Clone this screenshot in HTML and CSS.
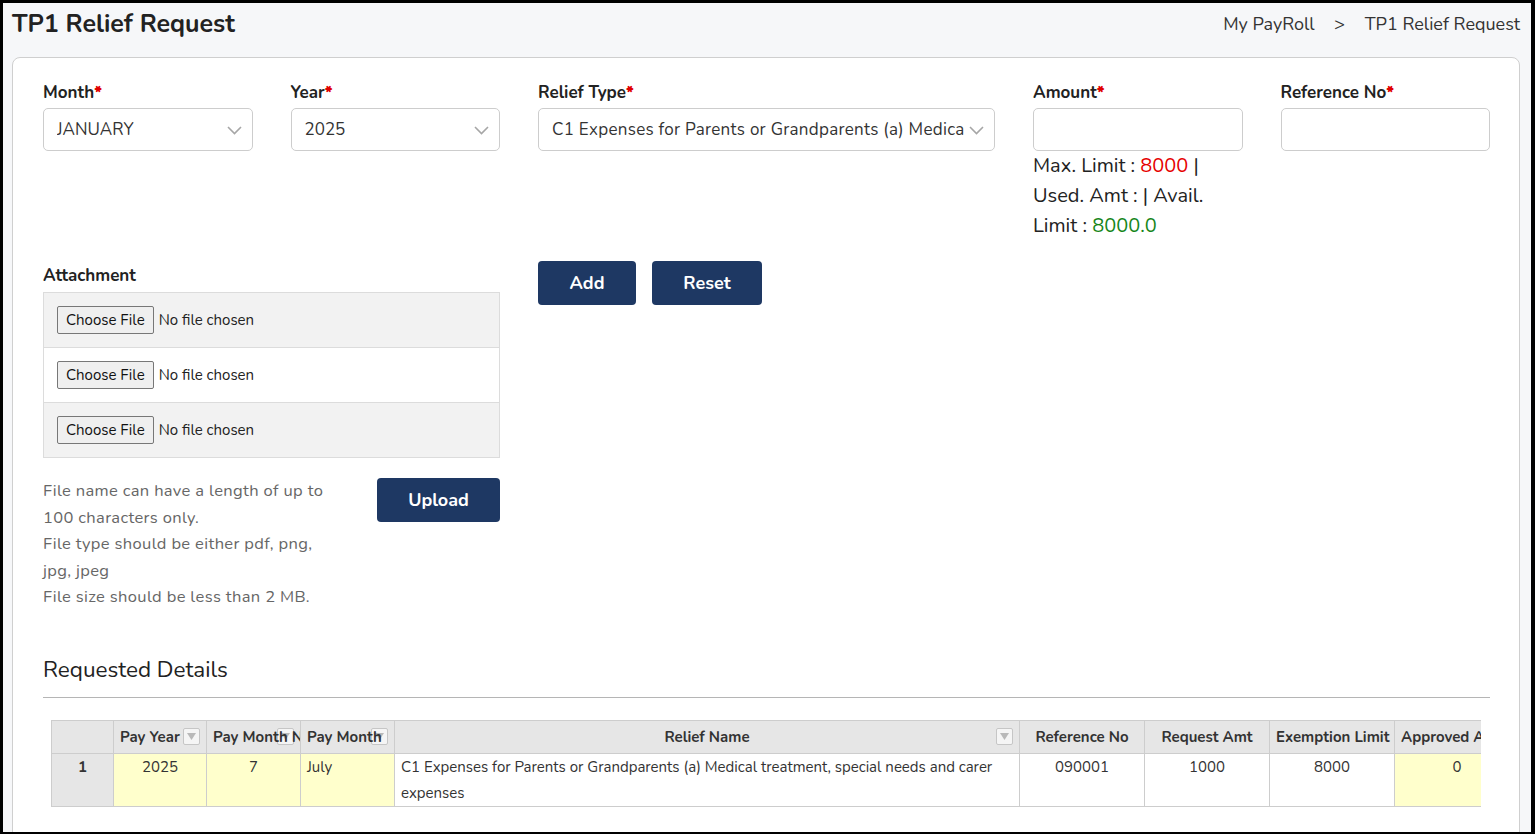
FILE: index.html
```html
<!DOCTYPE html>
<html lang="en">
<head>
  <meta charset="UTF-8">
  <title>TP1 Relief Request</title>
  <link rel="stylesheet" href="styles.css">
</head>
<body>
<div class="page">
  <header class="page-head">
    <h1>TP1 Relief Request</h1>
    <nav class="crumbs">My PayRoll <span class="sep">&gt;</span> TP1 Relief Request</nav>
  </header>

  <section class="card">
    <div class="form-row">
      <div class="field span-2">
        <label>Month<b>*</b></label>
        <div class="select">
          <span>JANUARY</span>
          <svg class="chev" width="15" height="9" viewBox="0 0 15 9"><polyline points="1,1 7.5,7.5 14,1"/></svg>
        </div>
      </div>
      <div class="field span-2">
        <label>Year<b>*</b></label>
        <div class="select">
          <span>2025</span>
          <svg class="chev" width="15" height="9" viewBox="0 0 15 9"><polyline points="1,1 7.5,7.5 14,1"/></svg>
        </div>
      </div>
      <div class="field span-4">
        <label>Relief Type<b>*</b></label>
        <div class="select wide">
          <span>C1 Expenses for Parents or Grandparents (a) Medical treatment, special needs and carer expenses</span>
          <svg class="chev" width="15" height="9" viewBox="0 0 15 9"><polyline points="1,1 7.5,7.5 14,1"/></svg>
        </div>
      </div>
      <div class="field span-2">
        <label>Amount<b>*</b></label>
        <input class="text-input" type="text">
        <div class="limits">Max. Limit : <span class="red">8000</span> | Used. Amt : | Avail. Limit : <span class="green">8000.0</span></div>
      </div>
      <div class="field span-2">
        <label>Reference No<b>*</b></label>
        <input class="text-input" type="text">
      </div>
    </div>

    <div class="form-row row-two">
      <div class="span-4 attach">
        <label>Attachment</label>
        <div class="attach-list">
          <div class="attach-row"><span class="file-btn">Choose File</span><span class="file-name">No file chosen</span></div>
          <div class="attach-row"><span class="file-btn">Choose File</span><span class="file-name">No file chosen</span></div>
          <div class="attach-row"><span class="file-btn">Choose File</span><span class="file-name">No file chosen</span></div>
        </div>
        <div class="upload-line">
          <div class="help">
            File name can have a length of up to 100 characters only.<br>
            File type should be either pdf, png, jpg, jpeg<br>
            File size should be less than 2 MB.
          </div>
          <button class="btn btn-upload">Upload</button>
        </div>
      </div>
      <div class="span-4 actions">
        <button class="btn btn-add">Add</button>
        <button class="btn btn-reset">Reset</button>
      </div>
    </div>

    <h2 class="section-title">Requested Details</h2>

    <div class="grid-wrap">
      <table class="grid">
        <colgroup>
          <col style="width:62px">
          <col style="width:93px">
          <col style="width:94px">
          <col style="width:94px">
          <col style="width:625px">
          <col style="width:125px">
          <col style="width:125px">
          <col style="width:125px">
          <col style="width:125px">
        </colgroup>
        <thead>
          <tr>
            <th></th>
            <th><span>Pay Year</span><i class="filter"><svg width="9" height="7" viewBox="0 0 9 7"><polygon points="0,0 9,0 4.5,7"/></svg></i></th>
            <th><span>Pay Month No</span><i class="filter"><svg width="9" height="7" viewBox="0 0 9 7"><polygon points="0,0 9,0 4.5,7"/></svg></i></th>
            <th><span>Pay Month</span><i class="filter"><svg width="9" height="7" viewBox="0 0 9 7"><polygon points="0,0 9,0 4.5,7"/></svg></i></th>
            <th class="c"><span>Relief Name</span><i class="filter"><svg width="9" height="7" viewBox="0 0 9 7"><polygon points="0,0 9,0 4.5,7"/></svg></i></th>
            <th class="c">Reference No</th>
            <th class="c">Request Amt</th>
            <th>Exemption Limit (RM)</th>
            <th>Approved Amt</th>
          </tr>
        </thead>
        <tbody>
          <tr>
            <td class="num">1</td>
            <td class="c hl">2025</td>
            <td class="c hl">7</td>
            <td class="hl">July</td>
            <td>C1 Expenses for Parents or Grandparents (a) Medical treatment, special needs and carer expenses</td>
            <td class="c">090001</td>
            <td class="c">1000</td>
            <td class="c">8000</td>
            <td class="c hl">0</td>
          </tr>
        </tbody>
      </table>
    </div>
  </section>
</div>
</body>
</html>
```

FILE: styles.css
```css
* {
  box-sizing: border-box;
}

html,
body {
  margin: 0;
  height: 834px;
  overflow: hidden;
  background: #000;
}

body {
  padding: 3px 4px 0 3px;
  font-family: "Nunito", Lato, "Noto Sans", sans-serif;
  color: #222;
}

.page {
  height: 829px;
  overflow: hidden;
  background: #f6f7f9;
  padding: 0 11px 0 9px;
}

.page-head {
  height: 42px;
  display: flex;
  align-items: center;
  justify-content: space-between;
}

.page-head h1 {
  margin: 0;
  font-size: 25px;
  font-weight: 700;
  color: #222;
}

.crumbs {
  font-size: 18px;
  color: #333;
}

.crumbs .sep {
  margin: 0 15px;
}

.card {
  margin-top: 12px;
  background: #fff;
  border: 1px solid #cfcfcf;
  border-radius: 8px;
  padding: 24px 29px 40px 30px;
  min-height: 800px;
}

.form-row {
  display: grid;
  grid-template-columns: repeat(12, 1fr);
  column-gap: 38px;
  align-items: start;
}

.span-2 {
  grid-column: span 2;
}

.span-4 {
  grid-column: span 4;
}

.field label,
.attach label {
  display: block;
  font-size: 17px;
  font-weight: 700;
  line-height: 22px;
  color: #222;
  margin-bottom: 4px;
}

.field label b {
  color: #e00000;
}

.select,
.text-input {
  display: flex;
  align-items: center;
  position: relative;
  width: 100%;
  height: 43px;
  border: 1px solid #cdcdcd;
  border-radius: 5px;
  background: #fff;
  font-family: inherit;
  font-size: 17px;
  color: #333;
}

.select {
  padding: 0 29px 0 13px;
}

.select span {
  white-space: nowrap;
  overflow: hidden;
}

.select.wide span {
  letter-spacing: 0.28px;
}

.chev {
  position: absolute;
  right: 10px;
  top: 17px;
  fill: none;
  stroke: #a6a6a6;
  stroke-width: 1.6;
}

.limits {
  font-size: 20px;
  line-height: 30px;
  color: #222;
}

.red {
  color: #e60000;
}

.green {
  color: #16861a;
}

.row-two {
  margin-top: 20px;
}

.attach label {
  padding-top: 4px;
  margin-bottom: 5px;
}

.attach-list {
  border: 1px solid #dcdcdc;
}

.attach-row {
  height: 55px;
  display: flex;
  align-items: center;
  padding-left: 13px;
  background: #f2f2f2;
  border-top: 1px solid #dcdcdc;
}

.attach-row:first-child {
  height: 54px;
  border-top: 0;
}

.attach-row:nth-child(2) {
  background: #fff;
}

.file-btn {
  display: inline-block;
  height: 28px;
  line-height: 26px;
  padding: 0 8px;
  border: 1px solid #777;
  border-radius: 2px;
  background: #efefef;
  font-size: 15px;
  color: #111;
}

.file-name {
  margin-left: 5px;
  font-size: 15px;
  color: #222;
}

.upload-line {
  display: flex;
  justify-content: space-between;
  align-items: flex-start;
  margin-top: 20px;
}

.help {
  width: 292px;
  font-size: 16.5px;
  letter-spacing: 0.35px;
  line-height: 26.5px;
  color: #666;
}

.btn {
  height: 44px;
  border: 0;
  border-radius: 4px;
  background: #1e3863;
  color: #fff;
  font-family: inherit;
  font-size: 18px;
  font-weight: 700;
  cursor: pointer;
}

.btn-upload {
  width: 123px;
}

.btn-add {
  width: 98px;
}

.btn-reset {
  width: 110px;
  margin-left: 12px;
}

.actions {
  display: flex;
  gap: 4px;
}

.section-title {
  margin: 44px 0 0;
  font-size: 22.5px;
  font-weight: 400;
  line-height: 30px;
  color: #222;
  padding-bottom: 12px;
  border-bottom: 1px solid #b5b5b5;
}

.grid-wrap {
  margin: 22px 9px 0 8px;
  overflow: hidden;
}

.grid {
  table-layout: fixed;
  border-collapse: collapse;
  width: 1468px;
  font-size: 15px;
  color: #333;
}

.grid th {
  position: relative;
  height: 33px;
  padding: 0 6px;
  background: #e6e6e6;
  border: 1px solid #cdcdcd;
  font-weight: 700;
  text-align: left;
  white-space: nowrap;
  overflow: hidden;
}

.grid th span {
  position: relative;
  z-index: 1;
}

.grid th.c,
.grid td.c {
  text-align: center;
}

.grid td {
  height: 53px;
  padding: 0 6px;
  vertical-align: top;
  line-height: 26px;
  border: 1px solid #cdcdcd;
  background: #fff;
}

.grid td.num {
  background: #e6e6e6;
  font-weight: 700;
  text-align: center;
}

.grid td.hl {
  background: #ffffcc;
}

.filter {
  position: absolute;
  right: 6px;
  top: 7px;
  width: 17px;
  height: 17px;
  display: flex;
  align-items: center;
  justify-content: center;
  border: 1px solid #c6c6c6;
  border-radius: 2px;
  background: #f5f5f5;
}

.filter svg {
  fill: #b9b9b9;
}
```
